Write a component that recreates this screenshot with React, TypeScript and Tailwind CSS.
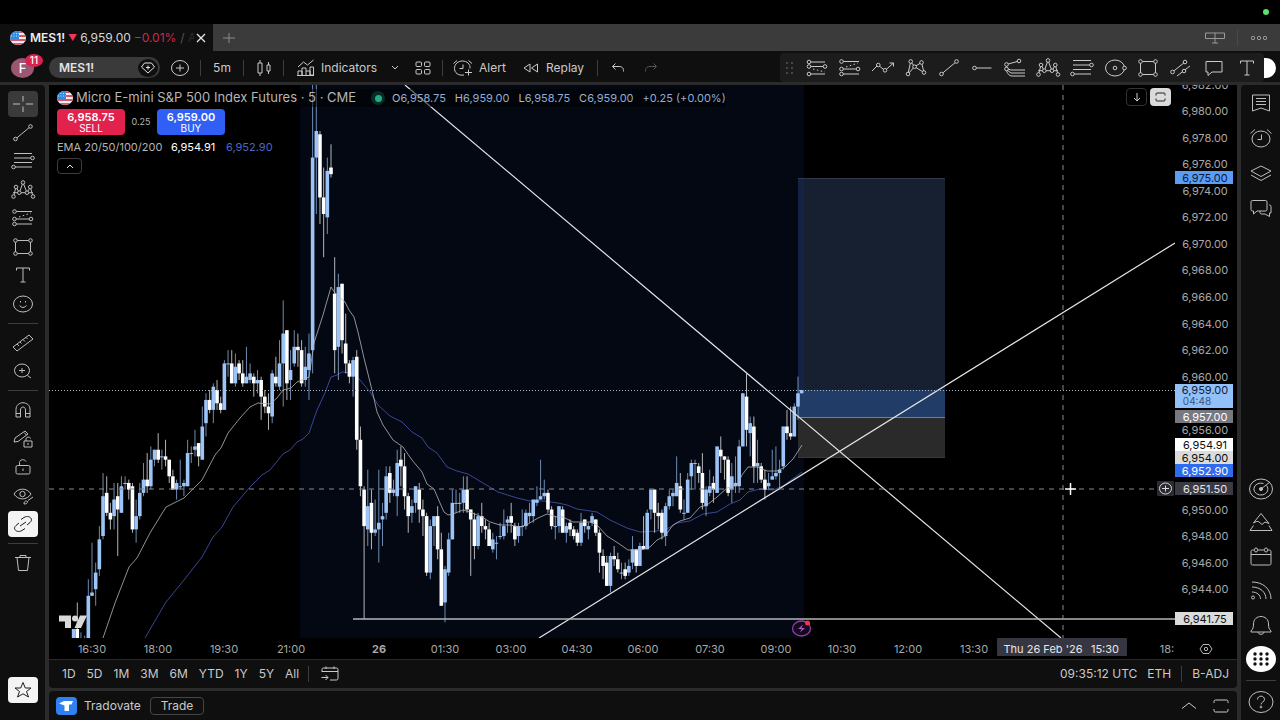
import type { ReactNode } from 'react';

/* ---------- chart data ---------- */

// One tick is 0.25 points, counted up from 6,940.00. Rows are [high, open, close, low].
type Candle = readonly [number, number, number, number];

const FIRST_INDEX = -5;

const CANDLES: readonly Candle[] = [
  [4, -2, 4, -2], [12, 4, -2, -2], [3, 0, 1, -1], [2, 0, 1, -1], [19, -2, 14, -2],
  [30, 14, 15, 14], [24, 16, 21, 11], [35, 22, 31, 20], [51, 32, 44, 31], [50, 45, 39, 38],
  [42, 39, 37, 34], [48, 38, 43, 34], [48, 44, 40, 26], [50, 39, 47, 39], [50, 48, 48, 46],
  [49, 48, 46, 43], [48, 47, 34, 33], [43, 34, 38, 30], [48, 38, 45, 37], [54, 45, 49, 44],
  [57, 49, 47, 45], [59, 47, 55, 46], [58, 55, 58, 53], [63, 58, 55, 54], [58, 56, 56, 52],
  [61, 56, 55, 53], [55, 55, 50, 48], [52, 50, 46, 46], [49, 46, 48, 43], [55, 47, 47, 46],
  [49, 47, 48, 44], [61, 47, 57, 47], [59, 57, 57, 54], [64, 58, 59, 56], [60, 60, 56, 53],
  [71, 55, 65, 55], [75, 66, 73, 62], [76, 73, 70, 69], [78, 70, 77, 66], [79, 76, 72, 70],
  [74, 72, 70, 69], [85, 70, 84, 70], [88, 84, 84, 80], [88, 84, 78, 78], [87, 78, 83, 77],
  [85, 84, 81, 79], [85, 81, 78, 77], [89, 78, 80, 78], [84, 79, 81, 78], [81, 80, 78, 74],
  [82, 78, 79, 75], [80, 79, 74, 67], [76, 74, 71, 69], [75, 71, 69, 64], [82, 68, 81, 66],
  [86, 80, 78, 77], [91, 77, 84, 76], [103, 84, 93, 71], [94, 94, 78, 73], [88, 79, 82, 73],
  [94, 84, 89, 83], [93, 89, 88, 83], [91, 88, 78, 77], [89, 79, 83, 77], [93, 82, 87, 73],
  [175, 88, 146, 81], [175, 146, 154, 129], [154, 153, 134, 126], [143, 134, 129, 116], [146, 128, 142, 123],
  [150, 143, 141, 140], [116, 105, 88, 81], [111, 89, 107, 79], [108, 108, 91, 87], [99, 90, 84, 81],
  [85, 84, 80, 78], [86, 80, 85, 74], [88, 86, 61, 58], [65, 61, 47, 44], [47, 46, 35, 7],
  [52, 34, 41, 29], [46, 42, 33, 28], [43, 33, 34, 32], [52, 34, 36, 24], [42, 37, 38, 29],
  [53, 39, 50, 37], [53, 51, 45, 42], [49, 45, 46, 44], [58, 44, 54, 38], [59, 55, 53, 47],
  [57, 53, 44, 40], [45, 44, 38, 33], [43, 39, 41, 36], [47, 42, 47, 39], [48, 46, 40, 36],
  [43, 40, 38, 32], [39, 38, 21, 20], [37, 21, 35, 19], [38, 35, 38, 29], [41, 38, 28, 25],
  [33, 28, 11, 11], [23, 12, 22, 6], [33, 21, 31, 20], [46, 31, 42, 31], [46, 42, 42, 39],
  [45, 42, 42, 39], [50, 42, 46, 39], [50, 46, 40, 39], [40, 40, 37, 20], [39, 37, 29, 25],
  [39, 29, 38, 28], [42, 38, 35, 33], [37, 35, 34, 31], [36, 34, 29, 29], [33, 28, 31, 27],
  [32, 30, 30, 25], [36, 32, 32, 31], [40, 32, 35, 31], [38, 36, 37, 33], [42, 38, 36, 33],
  [36, 35, 31, 29], [36, 32, 35, 30], [40, 35, 35, 32], [40, 35, 39, 34], [42, 38, 39, 36],
  [43, 38, 43, 36], [47, 42, 43, 41], [55, 43, 44, 43], [49, 44, 45, 43], [46, 45, 40, 39],
  [41, 40, 35, 34], [38, 35, 35, 31], [41, 35, 41, 33], [41, 40, 33, 33], [36, 33, 35, 30],
  [37, 36, 34, 32], [35, 34, 32, 31], [34, 33, 30, 29], [39, 30, 36, 29], [37, 37, 35, 33],
  [36, 34, 35, 31], [39, 36, 38, 35], [37, 37, 33, 32], [34, 33, 27, 21], [28, 26, 23, 19],
  [26, 24, 17, 17], [27, 17, 26, 15], [29, 26, 25, 23], [27, 25, 22, 21], [24, 21, 21, 19],
  [24, 22, 20, 19], [25, 21, 23, 20], [32, 24, 28, 22], [28, 28, 23, 21], [30, 23, 29, 23],
  [38, 29, 28, 28], [40, 28, 39, 28], [46, 40, 46, 37], [46, 46, 39, 33], [42, 39, 38, 34],
  [40, 39, 33, 31], [42, 32, 41, 29], [46, 41, 44, 40], [46, 44, 45, 41], [56, 44, 48, 44],
  [51, 47, 40, 39], [43, 39, 39, 37], [51, 39, 49, 39], [55, 50, 54, 46], [55, 54, 54, 46],
  [54, 53, 51, 48], [57, 51, 42, 40], [47, 41, 46, 38], [52, 45, 47, 44], [50, 48, 46, 42],
  [59, 45, 59, 45], [62, 58, 56, 51], [56, 56, 55, 49], [56, 55, 45, 44], [54, 46, 50, 42],
  [56, 47, 48, 45], [61, 47, 59, 45], [75, 59, 75, 59], [81, 74, 64, 59], [68, 63, 66, 56],
  [68, 65, 53, 48], [61, 53, 54, 48], [54, 53, 49, 48], [52, 49, 46, 43], [51, 47, 48, 46],
  [58, 49, 50, 49], [59, 50, 51, 49], [55, 51, 52, 46], [65, 53, 65, 52], [70, 65, 63, 61],
  [71, 63, 62, 61], [72, 62, 71, 62], [80, 71, 75, 67], [76, 75, 76, 75],
];

const EMA_20 =
  '103,638 115,603 129,567 137,558 150,533 166,507 184,498 202,480 215,455 221,448 228,433 240,418 250,407 258,403 270,404 277,398 283,390 291,388 297,382 309,377 314,343 323,315 331,287 335,293 345,302 349,310 354,317 358,332 364,358 372,390 377,412 383,425 393,440 403,447 412,460 422,472 427,484 434,489 440,503 444,512 448,515 453,514 463,510 470,512 482,517 490,522 500,525 510,525 520,527 528,524 538,518 547,514 557,517 563,517 573,522 590,522 597,525 607,536 618,543 628,550 640,550 650,547 657,540 665,536 673,525 680,521 690,518 700,507 707,505 717,497 727,488 737,485 742,475 748,467 757,467 767,471 777,471 785,467 793,459 802,445';

const EMA_50 =
  '145,638 166,602 184,580 202,557 213,537 222,527 233,507 250,487 262,475 270,470 283,454 290,450 297,442 303,439 309,433 317,410 325,393 331,377 337,375 342,372 353,373 360,380 370,392 378,405 390,416 402,422 412,432 422,438 428,447 437,453 447,467 457,471 468,474 483,483 498,492 517,498 530,501 543,501 558,503 567,505 577,509 597,512 610,520 627,528 640,532 657,531 667,529 677,523 690,521 703,514 717,512 730,504 740,500 748,492 760,489 773,490 783,486 802,472';

// 6,958 and 6,952 are left out: the value tags sit on top of them.
const PRICES = [6982, 6980, 6978, 6976, 6974, 6972, 6970, 6968, 6966, 6964, 6962, 6960, 6956, 6950, 6948, 6946, 6944];

const TIMES = [
  ['16:30', 92], ['18:00', 158], ['19:30', 224], ['21:00', 291], ['26', 379], ['01:30', 445], ['03:00', 511],
  ['04:30', 577], ['06:00', 643], ['07:30', 710], ['09:00', 776], ['10:30', 842], ['12:00', 908], ['13:30', 974],
] as const;

const TAGS = [
  { y: 178, text: '6,975.00', bg: '#5b9cf6', fg: '#0c1a33' },
  { y: 417, text: '6,957.00', bg: '#787883', fg: '#ffffff' },
  { y: 445, text: '6,954.91', bg: '#ffffff', fg: '#0f0f0f' },
  { y: 458, text: '6,954.00', bg: '#dbdbdb', fg: '#0f0f0f' },
  { y: 471, text: '6,952.90', bg: '#2f6bec', fg: '#ffffff' },
  { y: 489, text: '6,951.50', bg: '#3a3a45', fg: '#e6e6e6' },
  { y: 619, text: '6,941.75', bg: '#dbdbdb', fg: '#0f0f0f' },
];

const tickY = (t: number) => 642.3 - t * 3.32;
const priceY = (p: number) => tickY((p - 6940) * 4);
const formatPrice = (p: number) => p.toLocaleString('en-US', { minimumFractionDigits: 2 });

function CandleSeries() {
  return (
    <g>
      {CANDLES.map(([high, open, close, low], i) => {
        const x = 92 + (i + FIRST_INDEX) * 3.677;
        const up = close >= open;
        const top = tickY(Math.max(open, close));
        const height = Math.max(Math.abs(open - close) * 3.32, 1);
        return (
          <g key={i} fill={up ? '#9cc4f7' : '#ffffff'}>
            <rect x={x - 0.5} y={tickY(high)} width={1} height={(high - low) * 3.32} opacity={0.7} />
            <rect x={x - 1.8} y={top} width={3.6} height={height} />
          </g>
        );
      })}
    </g>
  );
}

function Chart() {
  return (
    <svg viewBox="49 85 1188 574" className="block w-full" role="img" aria-label="MES1! 5 minute chart">
      <defs>
        <clipPath id="plot">
          <rect x="49" y="85" width="1126" height="553" />
        </clipPath>
        <clipPath id="axis">
          <rect x="1175" y="85" width="62" height="574" />
        </clipPath>
      </defs>
      <g clipPath="url(#plot)">
        <rect x="300" y="85" width="504" height="553" fill="#030813" />
        <rect x="798" y="178" width="147" height="239" fill="#162030" />
        <rect x="798" y="178" width="6" height="239" fill="#152244" />
        <rect x="798" y="390" width="147" height="27" fill="#213c66" />
        <rect x="798" y="417" width="147" height="40" fill="#2a2a2a" />
        <path d="M798 178.5H945M798 457.5H945" stroke="#333a4a" />
        <path d="M798 417.5H945" stroke="#7b7b80" />
        <polyline points={EMA_50} fill="none" stroke="#3f4ea3" strokeOpacity="0.9" />
        <CandleSeries />
        <polyline points={EMA_20} fill="none" stroke="#b4b4b8" strokeOpacity="0.8" />
        <path d="M405 85L1061 638M539 638L1175 243" stroke="#e4e4e6" strokeWidth="1.2" />
        <path d="M353 619H1175" stroke="#b4b4b8" strokeWidth="1.3" />
        <path d="M49 390.5H1175" stroke="#a9b6c6" strokeDasharray="1 2" />
        <path d="M49 489H1157" stroke="#8a8a8e" strokeDasharray="5 5" />
        <path d="M1063 85V638" stroke="#8a8a8e" strokeDasharray="5 5" />
        <path d="M1070.5 483V495M1065 489H1076" stroke="#ffffff" strokeWidth="1.5" />
        <path d="M59 615.5H71V628H65V621.5H59ZM80 615.5H87L81 628H74.5Z" fill="#d9d9d9" />
        <circle cx="75" cy="618.5" r="3" fill="#d9d9d9" />
        <ellipse cx="801.5" cy="628.5" rx="9" ry="7.5" fill="#150a1c" stroke="#8e3da6" strokeWidth="1.3" />
        <path d="M803 624.5L798 629H801.5L800 632.5L805 628H801.5Z" fill="#b04fcb" />
        <circle cx="807.5" cy="623" r="2.5" fill="#f23645" />
      </g>

      <g clipPath="url(#axis)" className="fill-[#a8a8a8] font-['Inter',sans-serif] text-[11px]">
        {PRICES.map((p) => (
          <text key={p} x="1205" y={priceY(p) + 4} textAnchor="middle">
            {formatPrice(p)}
          </text>
        ))}
      </g>
      <g className="font-['Inter',sans-serif] text-[11px]" textAnchor="middle">
        <rect x="1175" y="384" width="58" height="24" fill="#92c0f8" />
        <text x="1205" y="394" fill="#10203a">6,959.00</text>
        <text x="1197" y="405" fill="#35557f" className="text-[10px]">04:48</text>
        {TAGS.map((t) => (
          <g key={t.text}>
            <rect x="1175" y={t.y - 7} width="58" height="13" fill={t.bg} />
            <text x="1205" y={t.y + 4} fill={t.fg}>{t.text}</text>
          </g>
        ))}
        <rect x="1157" y="481" width="17" height="15" rx="1" fill="#2b2b33" />
        <ellipse cx="1165.5" cy="488.5" rx="6" ry="5.5" fill="none" stroke="#dddddd" />
        <path d="M1162 488.5H1169M1165.5 485.5V491.5" stroke="#dddddd" />
      </g>

      <g className="fill-[#a8a8a8] font-['Inter',sans-serif] text-[11px]" textAnchor="middle">
        {TIMES.map(([label, x]) => (
          <text key={label} x={x} y="653" className={label === '26' ? 'font-bold' : 'font-normal'}>
            {label}
          </text>
        ))}
        <text x="1167" y="653">18:</text>
        <rect x="997" y="638" width="130" height="18" rx="1" fill="#363642" />
        <text x="1043" y="653" fill="#e6e6e6">Thu 26 Feb '26</text>
        <text x="1105" y="653" fill="#e6e6e6">15:30</text>
      </g>
      <path d="M1200 649L1203 644.5H1209L1212 649L1209 653.5H1203Z" fill="none" stroke="#b8b8b8" />
      <circle cx="1206" cy="649" r="1.7" fill="none" stroke="#b8b8b8" />
    </svg>
  );
}

/* ---------- icons ---------- */

function Icon({ children }: { children: ReactNode }) {
  return (
    <svg width="24" height="22" viewBox="0 0 24 22" fill="none" stroke="currentColor" strokeWidth="1" aria-hidden="true" className="shrink-0 overflow-visible">
      {children}
    </svg>
  );
}

function Nodes({ at }: { at: readonly (readonly [number, number])[] }) {
  return (
    <g className="fill-[#161616]">
      {at.map(([x, y]) => (
        <circle key={`${x}-${y}`} cx={x} cy={y} r="1.8" />
      ))}
    </g>
  );
}

const icons = {
  cross: <path d="M2 11H9M15 11H22M12 3V8.5M12 13.5V19" />,
  trend: <><path d="M4.5 17L19.5 4.5" /><Nodes at={[[4.5, 17], [19.5, 4.5]]} /></>,
  fib: <><path d="M3 3.5H21M3 8H20M3 12.5H21M4 17H21" /><Nodes at={[[21.5, 8], [2.5, 17]]} /></>,
  shoulders: (
    <>
      <path d="M2.5 17.5L5 8L8.3 13.7L12 3.5L16 13.7L19.3 8L22 17.5M2 13.7H22" />
      <Nodes at={[[2.5, 17.5], [5, 8], [8.3, 13.7], [12, 3.5], [16, 13.7], [19.3, 8], [22, 17.5]]} />
    </>
  ),
  long: (
    <>
      <path d="M4 4.5H21M4 12H20M4 17H21" /><path d="M8 10L20 6" strokeDasharray="1.5 2.5" />
      <Nodes at={[[3.5, 4.5], [3.5, 12], [20, 12], [3.5, 17]]} />
    </>
  ),
  short: (
    <>
      <path d="M4 5H20M4 9.5H20M4 17H20" /><path d="M8 12L20 15" strokeDasharray="1.5 2.5" />
      <Nodes at={[[4, 5], [4, 9.5], [20, 9.5], [4, 17]]} />
    </>
  ),
  rect: <><path d="M4.5 4.5H19.5V17.5H4.5Z" /><Nodes at={[[4.5, 4.5], [19.5, 4.5], [19.5, 17.5], [4.5, 17.5]]} /></>,
  text: <path d="M5.5 6.5V4H18.5V6.5M12 4V18M9.5 18H14.5" />,
  smile: <><ellipse cx="12" cy="11" rx="9.5" ry="8" /><path d="M8.5 12.5Q12 16.5 15.5 12.5M9.5 8V9.5M14.5 8V9.5" /></>,
  ruler: <path d="M2 15L18 3L22 7L6 19ZM6 12L8 14M9 10L10.5 11.5M12 7.5L14 9.5M15 5.5L16.5 7" />,
  zoomIn: <><ellipse cx="11" cy="10.5" rx="7.5" ry="6.5" /><path d="M16.5 15.5L20 18M8 10.5H14M11 8V13" /></>,
  magnet: <path d="M5 18V10.5C5 1.5 19 1.5 19 10.5V18H14.5V11C14.5 7 9.5 7 9.5 11V18ZM5 14.5H9.5M14.5 14.5H19" />,
  pencilLock: (
    <>
      <path d="M3 14L4 10L14 3L17 6L7 13.5L3 14M13 4.5L15.5 7" />
      <path d="M13 13H21V19H13ZM15 13V11C15 8.5 19.5 8.5 19.5 10.5M17 15V17" />
    </>
  ),
  unlock: <><rect x="5" y="9.5" width="14" height="8.5" rx="1.5" /><path d="M8.5 9.5V6.5C8.5 3 14 3 15 5.5M12 12.5V15" /></>,
  eye: (
    <>
      <path d="M3 9C7 2.5 16 2.5 20 9C16 15.5 7 15.5 3 9Z" /><circle cx="11.5" cy="9" r="2.7" />
      <path d="M13 19C13 16 15 15.5 16.5 16.5C17 18 15 19 13 19ZM17 15.5L22 12" />
    </>
  ),
  link: <path d="M10 6.5L13 4.5C18 1.5 23 6 19 9.5L16 12M14 15.5L11 17.5C6 20.5 1 16 5 12.5L8 10M9 13L15 9" />,
  trash: <path d="M4 5.5H20M9 5.5V3.5H15V5.5M6 5.5L7.5 18.5H16.5L18 5.5" />,
  star: <path d="M12 3.5L14.3 9H20L15.5 12.5L17.5 18L12 14.8L6.5 18L8.5 12.5L4 9H9.7Z" />,
  path: <><path d="M1 14L7 8L14 13.5L22.5 6M18.5 6H22.5V9.5" /><Nodes at={[[7.3, 8], [14, 13.3]]} /></>,
  xabcd: (
    <>
      <path d="M4 17L6.7 4.5L10.5 9.7L17.5 5.5L20 15.5L10.5 9.7L4 17" />
      <Nodes at={[[4, 17], [6.7, 4.5], [10.5, 9.7], [17.5, 5.5], [20, 15.5]]} />
    </>
  ),
  ray: <><path d="M4.5 11H21.5" /><Nodes at={[[4.5, 11]]} /></>,
  fibExt: <><path d="M3.5 7.5L16 4M3.5 8V12M5 12L8 13H22M4 13L8 16H22M3.5 13C4 16 6 19 9 19H22" /><Nodes at={[[3.5, 7.5], [3.5, 12], [16, 4]]} /></>,
  ellipse: <><ellipse cx="12" cy="11" rx="9.5" ry="8" /><Nodes at={[[12, 11], [21.5, 11]]} /></>,
  parallel: <><path d="M3.5 15L16 5M8 19L21 9" /><Nodes at={[[3.5, 15], [16, 5], [15, 14]]} /></>,
  comment: <path d="M4 4.5H20V15H10L6 18.5V15H4Z" />,
  plusCircle: <><ellipse cx="12" cy="11" rx="8.5" ry="7.5" /><path d="M8 11H16M12 7.5V14.5" /></>,
  candles: <path d="M6 6H10V16H6ZM8 3V6M8 16V19M15 8H18V14H15ZM16.5 5V8M16.5 14V17" />,
  indicators: <path d="M4 18V14H8V18M8 18V11H12V18M12 14H16V18M16 18V10H19.5V18ZM3 18.5H20M4 10L9.5 5L13.5 8L19.5 3" />,
  grid: (
    <>
      <rect x="5" y="5" width="5.5" height="4.5" rx="1" /><rect x="13.5" y="5" width="5.5" height="4.5" rx="1" />
      <rect x="5" y="12.5" width="5.5" height="4.5" rx="1" /><rect x="13.5" y="12.5" width="5.5" height="4.5" rx="1" />
    </>
  ),
  alertPlus: <path d="M13 18C7 19 3.5 15.5 3.5 11.5C3.5 7 7 4 11.5 4C16 4 19.5 7 19 11.5M12 7.5V11.5H8.5M2.5 6.5L6 3.5M17.5 3.5L21 6.5M14 15.5H21M17.5 12.5V18.5" />,
  replay: <path d="M11 7V15L5 11ZM18.5 7V15L12.5 11Z" />,
  undo: <path d="M9.5 6.5L6.5 9.5L9.5 12.5M6.5 9.5H13C17 9.5 17.5 12 17.5 14.5" />,
  redo: <path d="M14.5 6.5L17.5 9.5L14.5 12.5M17.5 9.5H11C7 9.5 6.5 12 6.5 14.5" />,
  watchlist: <path d="M3.5 3H20.5V19L12 16L3.5 19ZM7 6.5H17M7 9.5H17M7 12.5H17" />,
  alarm: <><ellipse cx="12" cy="12" rx="9" ry="8" /><path d="M12.5 7.5V12.5H8.5M1.5 6.5L6 2.5M18 2.5L22.5 6.5" /></>,
  layers: <path d="M12 4L22 9L12 14.5L2 9ZM2 13L12 18.5L22 13" />,
  chat: <path d="M3.5 3.5H16.5Q18 3.5 18 5V12.5Q18 14 16.5 14H8L4.5 17V14H3.5Q2 14 2 12.5V5Q2 3.5 3.5 3.5ZM20 8H20.5Q22 8 22 9.5V16H20.5V19.5L16 17H12.5Q11 17 11 15.5V14" />,
  radar: (
    <>
      <ellipse cx="12" cy="11" rx="11.5" ry="10" /><path d="M17.5 7.5A7 6 0 1 1 14.5 5.5M12 11L21 4" />
      <circle cx="12" cy="11" r="1.5" fill="currentColor" />
    </>
  ),
  pyramid: <path d="M12 1.5L4.5 11L7.5 9.5L9.5 9.5L13 12.5L16 10L20 11.5ZM20 13.5L23 18.5H1L4.5 13.5" />,
  calendar: (
    <>
      <rect x="2" y="4" width="20" height="15" rx="1.5" /><path d="M2 8.5H22" />
      <g className="fill-[#161616]"><rect x="5.5" y="2" width="3" height="4" rx="1.5" /><rect x="15.5" y="2" width="3" height="4" rx="1.5" /></g>
    </>
  ),
  feed: <><path d="M3 2C14 2 22 9 22 19M3 7C11 7 17 12 17 19M3 12C8 12 11.5 15 11.5 19" /><circle cx="4" cy="17.5" r="1.5" /></>,
  bell: <path d="M2 17C4 15 4.5 13.5 4.5 10C4.5 0 19.5 0 19.5 10C19.5 13.5 20 15 22 17V18H2ZM9 18C9 21 15 21 15 18" />,
  help: <><ellipse cx="12" cy="11" rx="12" ry="10.5" /><path d="M8.5 8.5C8.5 4 15.5 4 15.5 8.5C15.5 11 12 11 12 13.5" /><circle cx="12" cy="16" r="0.9" /></>,
  panel: <path d="M5 8V6.5Q5 5 6.5 5H17.5Q19 5 19 6.5V8M5 14V15.5Q5 17 6.5 17H17.5Q19 17 19 15.5V14" />,
  up: <path d="M5 13.5L12 8L19 13.5" />,
  goTo: <path d="M4 9V6.5Q4 5 5.5 5H18.5Q20 5 20 6.5V15.5Q20 17 18.5 17H12M4 8.5H20M8 3.5V6M16 3.5V6M3.5 14.5H10M7.5 12L10 14.5L7.5 17" />,
};

type IconName = keyof typeof icons;

function IconButton({ name, label, className = '' }: { name: IconName; label: string; className?: string }) {
  return (
    <button type="button" aria-label={label} className={`flex shrink-0 items-center justify-center ${className}`}>
      <Icon>{icons[name]}</Icon>
    </button>
  );
}

function Flag() {
  return (
    <svg width="16" height="14" viewBox="0 0 16 14" aria-hidden="true" className="shrink-0">
      <clipPath id="flag"><ellipse cx="8" cy="7" rx="8" ry="7" /></clipPath>
      <g clipPath="url(#flag)">
        <rect width="16" height="14" fill="#f0f0f2" />
        <path d="M0 1H16M0 5H16M0 9H16M0 13H16" stroke="#d9566a" strokeWidth="2" />
        <rect width="9" height="8" fill="#2f8be0" />
        <path d="M1 2.5H9M1 5H9" stroke="#cfe4f8" strokeDasharray="1 1.5" />
      </g>
    </svg>
  );
}

const Divider = () => <span className="h-4 w-px shrink-0 bg-[#3d3d3d]" />;

/* ---------- page sections ---------- */

function TabBar() {
  return (
    <div className="flex h-[27px] bg-[#3b3b3b]">
      <div className="flex w-[213px] items-center bg-[#0f0f0f] pl-[10px] text-[12px] whitespace-nowrap text-[#d6d6d6]">
        <Flag />
        <span className="ml-1 font-semibold text-[#ececec]">MES1!</span>
        <span className="ml-[3px] text-[9px] text-[#f23655]">▼</span>
        <span className="ml-[3px]">6,959.00</span>
        <span className="ml-[3px] text-[#c92a4b]">−0.01%</span>
        <span className="ml-1 w-[14px] overflow-hidden text-[#555]">/ <span className="text-[#2c2c2c]">A</span></span>
        <button type="button" aria-label="Close tab" className="mr-[7px] ml-auto">
          <svg width="10" height="10" viewBox="0 0 10 10" stroke="#e6e6e6" strokeWidth="1.3"><path d="M1 1L9 9M9 1L1 9" /></svg>
        </button>
      </div>
      <button type="button" aria-label="New tab" className="flex w-8 items-center justify-center">
        <svg width="12" height="10" viewBox="0 0 12 10" stroke="#8c8c8c"><path d="M0 5H12M6 0V10" /></svg>
      </button>
      <div className="ml-auto flex items-center gap-3 pr-3 text-[#9a9a9a]">
        <svg width="20" height="12" viewBox="0 0 20 12" fill="none" stroke="currentColor" aria-hidden="true"><path d="M.5 1H19.5V6.5H.5ZM10 1V11M7 11H13" /></svg>
        <span className="h-4 w-px bg-[#4a4a4a]" />
        <button type="button" aria-label="More">
          <svg width="18" height="6" viewBox="0 0 18 6" fill="none" stroke="currentColor"><circle cx="3" cy="3" r="1.7" /><circle cx="9" cy="3" r="1.7" /><circle cx="15" cy="3" r="1.7" /></svg>
        </button>
      </div>
    </div>
  );
}

const DRAWING_TOOLS: readonly (readonly [IconName, string])[] = [
  ['short', 'Short position'], ['long', 'Long position'], ['path', 'Path'], ['xabcd', 'XABCD pattern'], ['trend', 'Trend line'],
  ['ray', 'Horizontal ray'], ['fibExt', 'Fib extension'], ['shoulders', 'Head and shoulders'], ['fib', 'Fib retracement'],
  ['ellipse', 'Circle'], ['rect', 'Rectangle'], ['parallel', 'Parallel channel'], ['comment', 'Comment'], ['text', 'Text'],
];

function Toolbar() {
  return (
    <div className="flex h-[31px] items-center bg-[#0f0f0f] pt-[2px] text-[12px] text-[#cacaca]">
      <button type="button" aria-label="Account, 11 notifications" className="relative ml-[11px] h-5 w-[23px] rounded-[50%] bg-[#9c5672] text-[13px] leading-5 font-medium text-white">
        F
        <span className="absolute -top-1 left-[14px] h-[13px] w-[18px] rounded-[50%] bg-[#d9234e] text-center text-[10px] leading-[13px]">11</span>
      </button>
      <div className="ml-[15px] flex h-[21px] w-[111px] items-center rounded-full bg-[#3a3a3a] pr-[2px] pl-[10px]">
        <input aria-label="Symbol" defaultValue="MES1!" className="w-0 flex-1 bg-transparent text-[12px] font-semibold text-[#e2e2e2] outline-none" />
        <button type="button" aria-label="Symbol plan" className="flex h-[18px] w-5 items-center justify-center rounded-[50%] bg-[#0f0f0f]">
          <svg width="14" height="12" viewBox="0 0 14 12" fill="none" stroke="#e2e2e2"><path d="M3.5 1H10.5L13.5 5L7 11L.5 5ZM7 3.5V7.5M5 5.5H9" /></svg>
        </button>
      </div>
      <IconButton name="plusCircle" label="Compare" className="w-10" />
      <Divider />
      <button type="button" className="w-[42px]">5m</button>
      <Divider />
      <IconButton name="candles" label="Candles" className="w-[39px]" />
      <Divider />
      <button type="button" className="flex w-[100px] items-center gap-[3px] pl-[10px]">
        <Icon>{icons.indicators}</Icon>Indicators
      </button>
      <button type="button" aria-label="Favorite indicators" className="flex w-[22px] justify-center">
        <svg width="8" height="5" viewBox="0 0 8 5" fill="none" stroke="currentColor"><path d="M1 1L4 4L7 1" /></svg>
      </button>
      <IconButton name="grid" label="Templates" className="w-[34px]" />
      <span className="ml-[2px] flex"><Divider /></span>
      <button type="button" className="flex w-[76px] items-center gap-1 pl-2">
        <Icon>{icons.alertPlus}</Icon>Alert
      </button>
      <button type="button" className="flex w-[78px] items-center gap-[3px]">
        <Icon>{icons.replay}</Icon>Replay
      </button>
      <Divider />
      <IconButton name="undo" label="Undo" className="w-10" />
      <IconButton name="redo" label="Redo" className="w-[26px] text-[#555]" />
      <div className="ml-auto flex h-[29px] w-[484px] items-center rounded bg-[#1c1c1c] pl-1">
        <svg width="12" height="14" viewBox="0 0 12 14" fill="#5a5a5a" className="mr-1">
          {[2, 7, 12].map((y) => [3, 8].map((x) => <circle key={`${x}-${y}`} cx={x} cy={y} r="0.9" />))}
        </svg>
        <div className="flex flex-1 justify-between">
          {DRAWING_TOOLS.map(([name, label]) => <IconButton key={name} name={name} label={label} className="w-[33px]" />)}
        </div>
      </div>
      <span className="mr-1 h-5 w-3 rounded-r-full bg-white" />
    </div>
  );
}

function LeftTools() {
  const line = 'ml-2 h-px w-[30px] shrink-0 bg-[#3d3d3d]';
  return (
    <aside className="flex w-[45px] shrink-0 flex-col rounded-tr bg-[#0f0f0f] pt-[6px] pb-[17px] text-[#bebebe]">
      <div className="flex h-[226px] flex-col items-center justify-between">
        <IconButton name="cross" label="Cross" className="h-[26px] w-[30px] rounded bg-[#3a3a3a]" />
        <IconButton name="trend" label="Trend line" className="h-[26px]" />
        <IconButton name="fib" label="Fib retracement" className="h-[26px]" />
        <IconButton name="shoulders" label="Patterns" className="h-[26px]" />
        <IconButton name="long" label="Forecasting" className="h-[26px]" />
        <IconButton name="rect" label="Shapes" className="h-[26px]" />
        <IconButton name="text" label="Text" className="h-[26px]" />
        <IconButton name="smile" label="Icons" className="h-[26px]" />
      </div>
      <span className={`${line} my-[6px]`} />
      <div className="flex flex-col items-center gap-[2px]">
        <IconButton name="ruler" label="Measure" className="h-[26px]" />
        <IconButton name="zoomIn" label="Zoom in" className="h-[26px]" />
      </div>
      <span className={`${line} my-[6px]`} />
      <div className="flex h-[140px] flex-col items-center justify-between">
        <IconButton name="magnet" label="Magnet" className="h-[26px]" />
        <IconButton name="pencilLock" label="Keep drawing" className="h-[26px]" />
        <IconButton name="unlock" label="Lock drawings" className="h-[26px]" />
        <IconButton name="eye" label="Hide drawings" className="h-[26px]" />
        <IconButton name="link" label="Sync drawings" className="h-[26px] w-[30px] rounded bg-[#f4f4f4] text-[#1c1c1c]" />
      </div>
      <span className={`${line} my-[6px]`} />
      <IconButton name="trash" label="Remove" className="h-[26px]" />
      <IconButton name="star" label="Favorites" className="mt-auto ml-2 h-[26px] w-[30px] rounded bg-[#f4f4f4] text-[#1c1c1c]" />
    </aside>
  );
}

function RightTools() {
  return (
    <aside className="flex w-[39px] shrink-0 flex-col items-center rounded-tl bg-[#0f0f0f] pt-[5px] pb-[6px] text-[#bebebe]">
      <div className="flex flex-col gap-[10px]">
        <IconButton name="watchlist" label="Watchlist" className="h-[25px]" />
        <IconButton name="alarm" label="Alerts" className="h-[25px]" />
        <IconButton name="layers" label="Object tree" className="h-[25px]" />
        <IconButton name="chat" label="Chats" className="h-[25px]" />
      </div>
      <div className="mt-auto flex flex-col gap-[9px]">
        <IconButton name="radar" label="Screeners" className="h-[25px]" />
        <IconButton name="pyramid" label="Pine" className="h-[25px]" />
        <IconButton name="calendar" label="Calendars" className="h-[25px]" />
        <IconButton name="feed" label="News" className="h-[25px]" />
        <IconButton name="bell" label="Notifications" className="h-[25px]" />
      </div>
      <button type="button" aria-label="Products" className="mt-[9px] flex h-[26px] w-[30px] items-center justify-center rounded-[50%] bg-white">
        <svg width="16" height="14" viewBox="0 0 16 14" fill="#0f0f0f">
          {[2, 7, 12].map((y) => [2, 8, 14].map((x) => <circle key={`${x}-${y}`} cx={x} cy={y} r="1.7" />))}
        </svg>
      </button>
      <span className="mt-2 mb-2 h-px w-[30px] bg-[#3d3d3d]" />
      <IconButton name="help" label="Help" className="h-[25px]" />
    </aside>
  );
}

function OrderButton({ price, side, className }: { price: string; side: string; className: string }) {
  return (
    <button type="button" className={`h-[26px] w-[68px] rounded text-white ${className}`}>
      <span className="block text-[11px] leading-[13px] font-semibold">{price}</span>
      <span className="block text-[10px] leading-[9px]">{side}</span>
    </button>
  );
}

function Legend() {
  return (
    <div className="absolute top-[4px] left-2 text-[#b5b5b5]">
      <div className="flex h-[18px] items-center bg-black/50">
        <Flag />
        <h1 className="ml-[3px] w-[288px] text-[13px] whitespace-nowrap">Micro E-mini S&amp;P 500 Index Futures · 5 · CME</h1>
        <span className="ml-[7px] flex h-[14px] w-[14px] items-center justify-center rounded-full bg-[#0a2a25]">
          <span className="h-[7px] w-[7px] rounded-full bg-[#22ab82]" />
        </span>
        <p className="ml-[7px] flex gap-[9px] text-[11px] whitespace-nowrap text-[#92acd6]">
          <span><span className="text-[#b5b5b5]">O</span>6,958.75</span>
          <span><span className="text-[#b5b5b5]">H</span>6,959.00</span>
          <span><span className="text-[#b5b5b5]">L</span>6,958.75</span>
          <span><span className="text-[#b5b5b5]">C</span>6,959.00</span>
          <span>+0.25 (+0.00%)</span>
        </p>
      </div>
      <div className="mt-[2px] flex items-center text-[9px]">
        <OrderButton price="6,958.75" side="SELL" className="bg-[#e0224c]" />
        <span className="w-8 text-center">0.25</span>
        <OrderButton price="6,959.00" side="BUY" className="bg-[#2f5ff5]" />
      </div>
      <div className="mt-1 flex h-4 items-center gap-2 text-[11px]">
        <span className="w-[106px]">EMA 20/50/100/200</span>
        <span className="w-[47px] text-white">6,954.91</span>
        <span className="text-[#4a67c8]">6,952.90</span>
      </div>
      <button type="button" aria-label="Collapse legend" className="mt-[3px] flex h-4 w-[25px] items-center justify-center rounded-sm border border-[#3d3d3d] bg-black">
        <svg width="8" height="5" viewBox="0 0 8 5" fill="none" stroke="#e6e6e6"><path d="M1 4L4 1L7 4" /></svg>
      </button>
    </div>
  );
}

const RANGES = ['1D', '5D', '1M', '3M', '6M', 'YTD', '1Y', '5Y', 'All'];

function RangeBar() {
  return (
    <div className="flex h-[29px] items-center rounded-b border-t border-[#2a2a2a] bg-[#0f0f0f] px-2 text-[12px] text-[#cacaca]">
      <div className="flex gap-[11px] pl-[5px]">
        {RANGES.map((r) => <button key={r} type="button">{r}</button>)}
      </div>
      <span className="ml-[9px] flex"><Divider /></span>
      <IconButton name="goTo" label="Go to date" className="ml-[9px]" />
      <div className="ml-auto flex items-center gap-[10px]">
        <button type="button">09:35:12 UTC</button>
        <button type="button">ETH</button>
        <Divider />
        <button type="button">B-ADJ</button>
      </div>
    </div>
  );
}

function BrokerBar() {
  return (
    <div className="mt-[3px] flex h-[29px] items-center rounded-t bg-[#0f0f0f] pr-1 pl-[7px] text-[12px] text-[#cacaca]">
      <svg width="21" height="18" viewBox="0 0 21 18" aria-hidden="true">
        <rect width="21" height="18" rx="4" fill="#2f80f0" />
        <path d="M3 6.5L8 4H17L15.5 7.5H13V14H8.5V8.5Z" fill="#ffffff" />
      </svg>
      <span className="ml-[7px] w-[57px]">Tradovate</span>
      <button type="button" className="ml-[9px] h-[18px] w-[54px] rounded border border-[#454545] leading-4">Trade</button>
      <div className="ml-auto flex gap-2">
        <IconButton name="up" label="Open panel" />
        <IconButton name="panel" label="Maximize panel" />
      </div>
    </div>
  );
}

export default function App() {
  return (
    <div className="flex min-h-screen flex-col bg-[#2b2b2b] font-['Inter',sans-serif]">
      <div className="flex h-6 items-center justify-end bg-black pr-[11px]">
        <span className="h-[6px] w-[6px] rounded-full bg-[#5fe06a]" />
      </div>
      <TabBar />
      <Toolbar />
      <div className="mt-[3px] flex flex-1 gap-1">
        <LeftTools />
        <main className="flex min-w-0 flex-1 flex-col">
          <div className="relative flex-1 bg-black">
            <Chart />
            <Legend />
            <div className="absolute top-[3px] right-[66px] flex gap-[3px]">
              <button type="button" aria-label="Scroll down" className="flex h-[18px] w-[21px] items-center justify-center rounded border border-[#333] bg-black">
                <svg width="8" height="9" viewBox="0 0 8 9" fill="none" stroke="#cfcfcf"><path d="M4 0V8M1 5L4 8L7 5" /></svg>
              </button>
              <button type="button" aria-label="Fit chart" className="flex h-[18px] w-[21px] items-center justify-center rounded bg-[#dbdbdb]">
                <svg width="11" height="10" viewBox="0 0 11 10" fill="none" stroke="#222"><path d="M1 3.5V2Q1 1 2 1H9Q10 1 10 2V3.5M1 6.5V8Q1 9 2 9H9Q10 9 10 8V6.5" /></svg>
              </button>
            </div>
          </div>
          <RangeBar />
          <BrokerBar />
        </main>
        <RightTools />
      </div>
    </div>
  );
}
